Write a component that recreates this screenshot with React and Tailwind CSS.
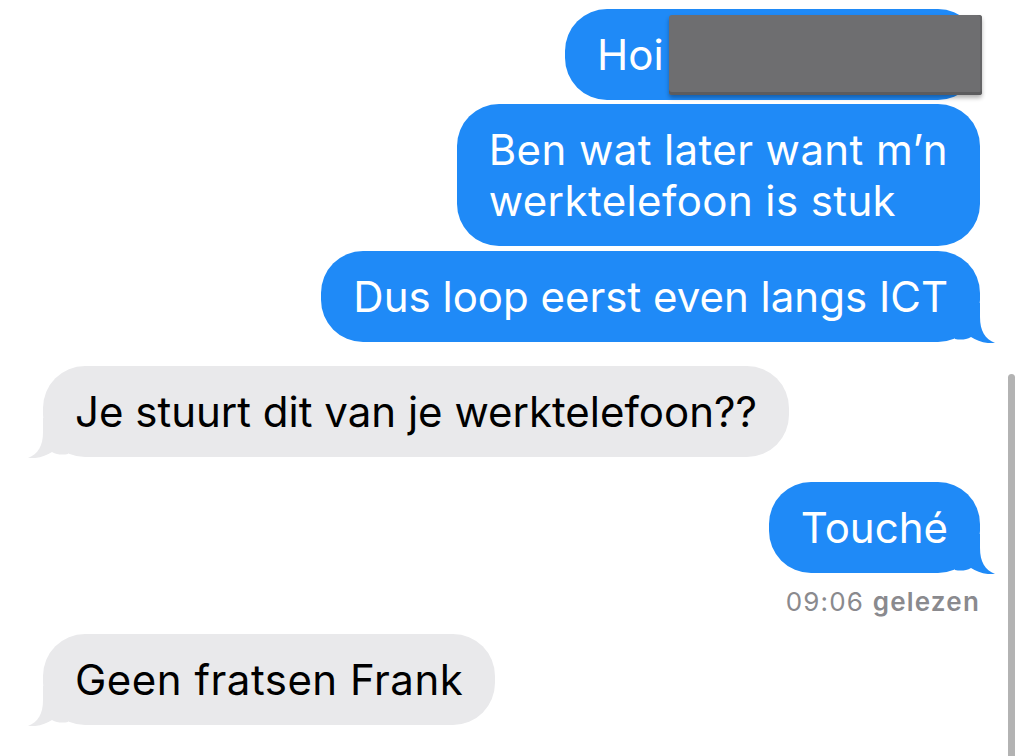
import React from "react";

const Tail = ({ side, fill }) => (
    <svg
        width="40"
        height="40"
        viewBox="0 0 40 40"
        className={side === "right" ? "absolute -right-[15px] -bottom-px" : "absolute -left-[15px] -bottom-px"}
    >
        <g transform={side === "right" ? undefined : "translate(40,0) scale(-1,1)"}>
            <path d="M0 0H25V14C25 28 30 36 40 40C31 41 22 38 16 34C11 37 5 37 0 36Z" fill={fill} />
        </g>
    </svg>
);

const Bubble = ({ me, tail, className = "", children }) => (
    <div
        className={`relative px-[32px] py-[20px] rounded-[42px] text-[42px] leading-[51px] ${
            me ? "self-end bg-[#1f8af7] text-white" : "self-start bg-[#e9e9eb] text-black"
        } ${className}`}
    >
        {children}
        {tail && <Tail side={me ? "right" : "left"} fill={me ? "#1f8af7" : "#e9e9eb"} />}
    </div>
);

const App = () => {
    return (
        <div className="relative w-[1024px] h-[756px] overflow-hidden bg-white font-['Inter','Liberation_Sans',sans-serif]">
            <div className="flex flex-col pl-[43px] pr-[44px] pt-[9px]">
                <Bubble me className="w-[415px]">
                    Hoi
                    {/* name blacked out */}
                    <div className="absolute left-[104px] top-[6px] w-[313px] h-[80px] rounded-[3px] bg-[#6e6e70] shadow-[0_3px_4px_rgba(0,0,0,0.3),inset_0_-3px_0_#5c5c5e,inset_-2px_0_0_#646466]" />
                </Bubble>
                <Bubble me className="mt-[4px] tracking-[0.4px]">
                    Ben wat later want m’n
                    <br />
                    werktelefoon is stuk
                </Bubble>
                <Bubble me tail className="mt-[5px]">
                    Dus loop eerst even langs ICT
                </Bubble>
                <Bubble tail className="mt-[24px]">
                    Je stuurt dit van je werktelefoon??
                </Bubble>
                <Bubble me tail className="mt-[25px]">
                    Touché
                </Bubble>
                <div className="self-end mt-[13px] text-[26px] leading-[32px] tracking-[1.2px] text-[#8a8a8e]">
                    09:06 <span className="font-semibold">gelezen</span>
                </div>
                <Bubble tail className="mt-[16px] tracking-[0.5px]">
                    Geen fratsen Frank
                </Bubble>
            </div>
            <div className="absolute left-[1008px] top-[374px] w-[7px] h-[400px] rounded-full bg-[#b3b3b3]" />
        </div>
    );
};

export default App;
